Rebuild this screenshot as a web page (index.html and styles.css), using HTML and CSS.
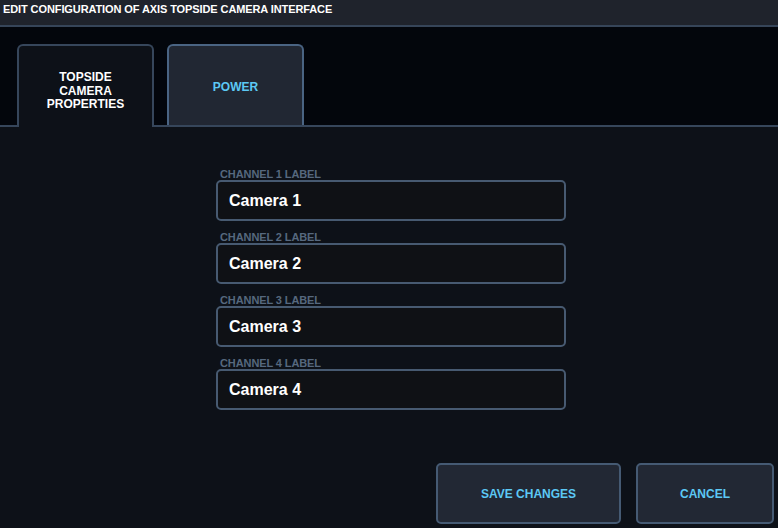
FILE: index.html
```html
<!DOCTYPE html>
<html>
<head>
<meta charset="utf-8">
<link rel="stylesheet" href="styles.css">
</head>
<body>
<div class="app">
  <div class="header">EDIT CONFIGURATION OF AXIS TOPSIDE CAMERA INTERFACE</div>
  <div class="tabbar">
    <div class="tab active">TOPSIDE<br>CAMERA<br>PROPERTIES</div>
    <div class="tab">POWER</div>
  </div>
  <div class="content">
    <div class="fields">
      <div class="field">
        <div class="label">CHANNEL 1 LABEL</div>
        <div class="input">Camera 1</div>
      </div>
      <div class="field">
        <div class="label">CHANNEL 2 LABEL</div>
        <div class="input">Camera 2</div>
      </div>
      <div class="field">
        <div class="label">CHANNEL 3 LABEL</div>
        <div class="input">Camera 3</div>
      </div>
      <div class="field">
        <div class="label">CHANNEL 4 LABEL</div>
        <div class="input">Camera 4</div>
      </div>
    </div>
    <div class="actions">
      <div class="btn save">SAVE CHANGES</div>
      <div class="btn cancel">CANCEL</div>
    </div>
  </div>
</div>
</body>
</html>
```

FILE: styles.css
```css
* { box-sizing: border-box; }
html, body {
  margin: 0;
  padding: 0;
  width: 778px;
  height: 528px;
  overflow: hidden;
  background: #0d1118;
  font-family: "Liberation Sans", Arial, sans-serif;
}
.app {
  display: flex;
  flex-direction: column;
  height: 528px;
}
.header {
  height: 27px;
  background: #1f232c;
  border-bottom: 2px solid #364559;
  color: #ffffff;
  font-size: 11px;
  font-weight: bold;
  letter-spacing: -0.1px;
  padding: 3px 0 0 3px;
  line-height: 13px;
}
.tabbar {
  background: #03060c;
  display: flex;
  gap: 13px;
  padding: 17px 0 0 17px;
  border-bottom: 2px solid #36465b;
  height: 100px;
}
.tab {
  width: 137px;
  height: 81px;
  border: 2px solid #4a6483;
  border-bottom: none;
  border-radius: 6px 6px 0 0;
  background: #212733;
  color: #5cc8f4;
  font-size: 12px;
  font-weight: bold;
  letter-spacing: 0;
  line-height: 13.5px;
  text-align: center;
  display: flex;
  align-items: center;
  justify-content: center;
  padding-top: 5px;
}
.tab.active {
  height: 83px;
  margin-bottom: -2px;
  background: #0d1118;
  border-color: #36465b;
  color: #ffffff;
  padding-top: 10px;
}
.content {
  flex: 1;
  display: flex;
  flex-direction: column;
  padding-top: 41px;
}
.fields {
  display: flex;
  flex-direction: column;
  gap: 10px;
  padding-left: 216px;
}
.field {
  width: 350px;
}
.label {
  color: #56687e;
  font-size: 11px;
  font-weight: bold;
  letter-spacing: -0.1px;
  line-height: 12px;
  padding-left: 4px;
}
.input {
  height: 41px;
  border: 2px solid #475a71;
  border-radius: 5px;
  background: #0f1115;
  color: #ffffff;
  font-size: 16px;
  font-weight: bold;
  padding-left: 11px;
  display: flex;
  align-items: center;
}
.actions {
  margin-top: auto;
  display: flex;
  justify-content: flex-end;
  gap: 15px;
  padding: 0 4px 4px 0;
}
.btn {
  height: 61px;
  background: #222834;
  border: 2px solid #455a73;
  border-radius: 5px;
  color: #5cc8f4;
  font-size: 12px;
  font-weight: bold;
  letter-spacing: 0;
  display: flex;
  align-items: center;
  justify-content: center;
}
.save { width: 185px; }
.cancel { width: 138px; }
```
